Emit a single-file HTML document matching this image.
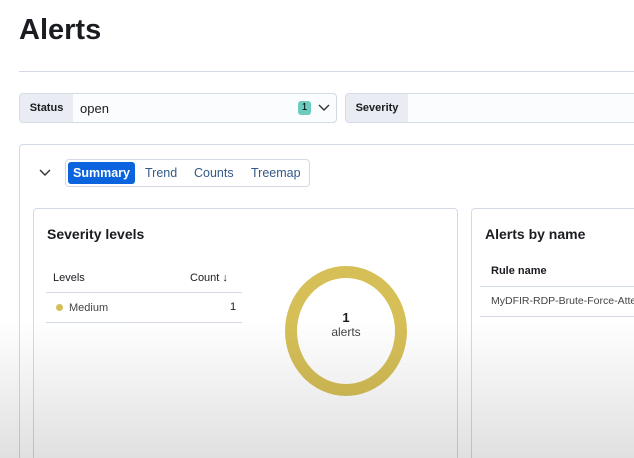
<!DOCTYPE html><html style="overflow:hidden;height:458px"><head><style>
html,body{margin:0;width:634px;height:458px;overflow:hidden}
body{background:#fff;font-family:"Liberation Sans",sans-serif;position:relative;color:#1a1c21}
.a{position:absolute}
.box{border:1px solid #d3dae6;border-radius:4px;box-sizing:border-box}
.ov{position:absolute;left:0;top:0;width:634px;height:458px;background:linear-gradient(to bottom,rgba(0,0,0,0) 0,rgba(0,0,0,0) 320px,rgba(0,0,0,.12) 458px);pointer-events:none}
</style></head><body>
<div class="a" style="left:19px;top:14px;font-size:29px;font-weight:bold">Alerts</div>
<div class="a" style="left:19px;top:71px;width:615px;height:1px;background:#d3dae6"></div>
<div class="a box" style="left:19px;top:93px;width:318px;height:30px;background:#fbfcfd;overflow:hidden">
 <div class="a" style="left:0;top:0;width:53px;height:28px;background:#e9edf3;font-size:11px;font-weight:bold;line-height:28px;text-align:center">Status</div>
 <div class="a" style="left:60px;top:7px;font-size:13px">open</div>
 <div class="a" style="left:278px;top:7px;width:13px;height:14px;background:#6dccbf;border-radius:3px;font-size:10px;text-align:center;line-height:14px;color:#000">1</div>
 <svg class="a" style="left:298px;top:10px" width="12" height="8"><path d="M1 1l5 5 5-5" fill="none" stroke="#333" stroke-width="1.4"/></svg>
</div>
<div class="a box" style="left:345px;top:93px;width:300px;height:30px;background:#fbfcfd;overflow:hidden">
 <div class="a" style="left:0;top:0;width:62px;height:28px;background:#e9edf3;font-size:11px;font-weight:bold;line-height:28px;text-align:center">Severity</div>
</div>
<div class="a box" style="left:19px;top:144px;width:630px;height:330px;border-bottom:none"></div>
<svg class="a" style="left:39px;top:169px" width="12" height="8"><path d="M1 1l5 5 5-5" fill="none" stroke="#333" stroke-width="1.4"/></svg>
<div class="a box" style="left:65px;top:159px;width:245px;height:28px;background:#fff"></div>
<div class="a" style="left:68px;top:162px;width:67px;height:22px;background:#0b64dd;border-radius:3px;color:#fff;font-size:12.5px;font-weight:bold;line-height:22px;text-align:center">Summary</div>
<div class="a" style="left:145px;top:166px;font-size:12.5px;color:#34598a">Trend</div>
<div class="a" style="left:194px;top:166px;font-size:12.5px;color:#34598a">Counts</div>
<div class="a" style="left:251px;top:166px;font-size:12.5px;color:#34598a">Treemap</div>
<div class="a box" style="left:33px;top:208px;width:425px;height:270px;border-bottom:none"></div>
<div class="a" style="left:47px;top:226px;font-size:14px;font-weight:bold">Severity levels</div>
<div class="a" style="left:53px;top:272px;font-size:11px">Levels</div>
<div class="a" style="left:190px;top:272px;font-size:11px">Count ↓</div>
<div class="a" style="left:46px;top:292px;width:196px;height:1px;background:#d3dae6"></div>
<div class="a" style="left:56px;top:304px;width:7px;height:7px;border-radius:50%;background:#d6bf57"></div>
<div class="a" style="left:69px;top:302px;font-size:11px;color:#444">Medium</div>
<div class="a" style="left:230px;top:301px;font-size:11px">1</div>
<div class="a" style="left:46px;top:322px;width:196px;height:1px;background:#d3dae6"></div>
<div class="a" style="left:285px;top:266px;width:122px;height:130px;border-radius:50%;border:12px solid #d6bf57;box-sizing:border-box"></div>
<div class="a" style="left:316px;top:310px;width:60px;text-align:center;font-size:13px;font-weight:bold">1</div>
<div class="a" style="left:316px;top:325px;width:60px;text-align:center;font-size:12px;color:#444">alerts</div>
<div class="a box" style="left:471px;top:208px;width:180px;height:270px;border-bottom:none"></div>
<div class="a" style="left:485px;top:226px;font-size:14px;font-weight:bold">Alerts by name</div>
<div class="a" style="left:491px;top:265px;font-size:11px;font-weight:bold">Rule name</div>
<div class="a" style="left:480px;top:286px;width:160px;height:1px;background:#d3dae6"></div>
<div class="a" style="left:491px;top:295px;font-size:10.5px;color:#444;white-space:nowrap">MyDFIR-RDP-Brute-Force-Attempt</div>
<div class="a" style="left:480px;top:316px;width:160px;height:1px;background:#d3dae6"></div>
<div class="ov"></div>
</body></html>
